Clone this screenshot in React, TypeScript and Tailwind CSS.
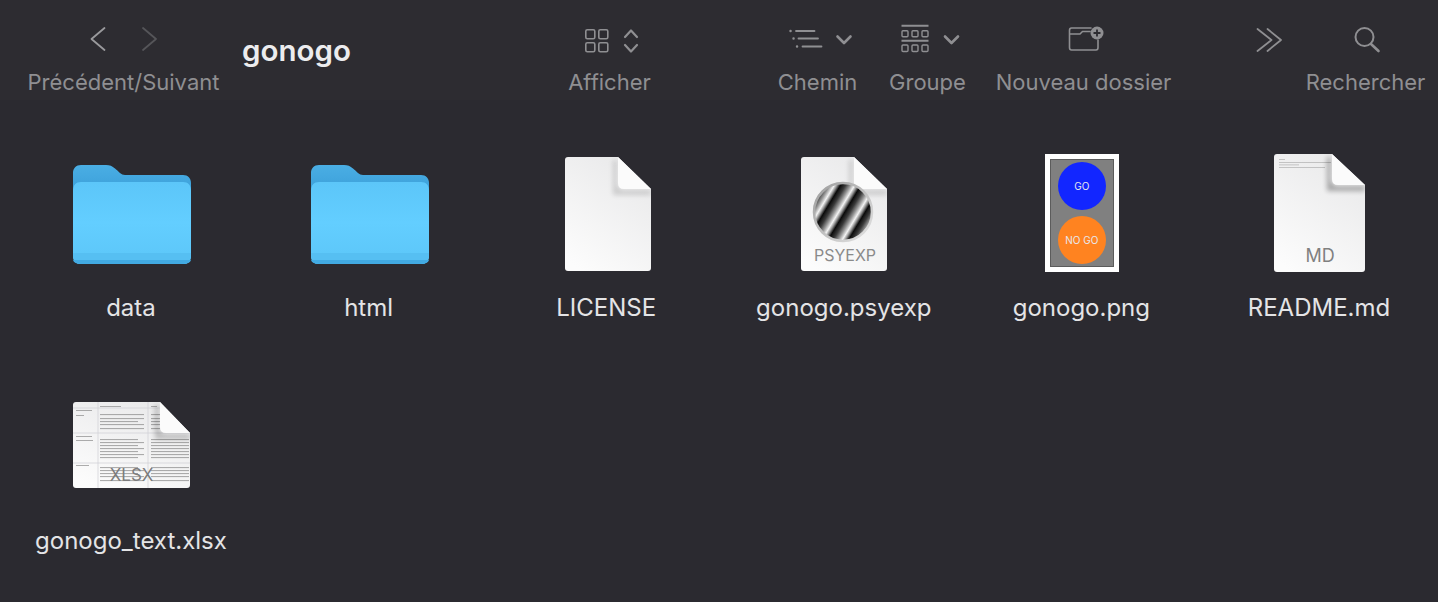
import type { ReactNode } from "react";

const labelFont = "font-['Inter','Liberation_Sans',sans-serif]";
const svgFont = "Inter, Liberation Sans, sans-serif";

function Folder({ id }: { id: string }) {
  return (
    <svg width="128" height="128" viewBox="0 0 128 128" fill="none">
      <defs>
        <linearGradient id={`${id}-back`} x1="0" y1="0" x2="0" y2="1">
          <stop offset="0" stopColor="#4aaee4" />
          <stop offset="1" stopColor="#2b8fcd" />
        </linearGradient>
        <linearGradient id={`${id}-front`} x1="0" y1="0" x2="0" y2="1">
          <stop offset="0" stopColor="#5cc6f9" />
          <stop offset="0.5" stopColor="#63ceff" />
          <stop offset="1" stopColor="#5cc6f8" />
        </linearGradient>
      </defs>
      <path
        d="M6 23c0-4.500 3-8 8-8h25c4 0 6 1 9 3.500 4 3 6 6.500 10 6.500h58c5 0 8 3.500 8 8v40h-118z"
        fill={`url(#${id}-back)`}
      />
      <path
        d="M6 41c0-6 3-9 8-9h102c5 0 8 3 8 9v65c0 4.500-3 8-8 8h-102c-5 0-8-3.500-8-8z"
        fill={`url(#${id}-front)`}
      />
      <path d="M6 103h118v3c0 4.500-3 8-8 8h-102c-5 0-8-3.500-8-8z" fill="#56bff2" />
      <path d="M6 110h118c-.7 2.500-3.500 4-8 4h-102c-4.500 0-7.300-1.500-8-4z" fill="#42aae2" />
    </svg>
  );
}

type PageProps = {
  id: string;
  x0: number;
  x1: number;
  y0: number;
  y1: number;
  foldX: number;
  foldY: number;
  shadow?: number;
  children?: ReactNode;
};

function Page({ id, x0, x1, y0, y1, foldX, foldY, shadow = 0.14, children }: PageProps) {
  return (
    <>
      <defs>
        <linearGradient id={id} x1="0.75" y1="0" x2="0.2" y2="1">
          <stop offset="0" stopColor="#e9e9ea" />
          <stop offset="1" stopColor="#fcfcfc" />
        </linearGradient>
        <filter id={`${id}-blur`} x="-40%" y="-40%" width="180%" height="180%">
          <feGaussianBlur stdDeviation="2.5" />
        </filter>
        <clipPath id={`${id}-clip`}>
          <path d={`M${x0} ${y0}H${foldX}L${x1} ${foldY}V${y1}H${x0}Z`} />
        </clipPath>
      </defs>
      <path
        d={`M${x0 + 3} ${y0}H${foldX}L${x1} ${foldY}V${y1 - 3}Q${x1} ${y1} ${x1 - 3} ${y1}H${x0 + 3}Q${x0} ${y1} ${x0} ${y1 - 3}V${y0 + 3}Q${x0} ${y0} ${x0 + 3} ${y0}Z`}
        fill={`url(#${id})`}
      />
      {children}
      <g clipPath={`url(#${id}-clip)`}>
        <path
          d={`M${foldX - 1} ${y0 + 3}V${foldY - 6}Q${foldX - 1} ${foldY + 1} ${foldX + 6} ${foldY + 1}H${x1}V${foldY + 6}H${foldX - 5}V${y0 + 3}Z`}
          fill="#000"
          opacity={shadow}
          filter={`url(#${id}-blur)`}
        />
      </g>
      <path d={`M${foldX} ${y0}L${x1} ${foldY}H${foldX + 6}Q${foldX} ${foldY} ${foldX} ${foldY - 6}Z`} fill="#fbfbfb" />
    </>
  );
}

function LicenseIcon() {
  return (
    <svg width="128" height="128" viewBox="0 0 128 128">
      <Page id="lic" x0={23} x1={109} y0={7} y1={121} foldX={76} foldY={39} />
    </svg>
  );
}

function PsyexpIcon() {
  return (
    <svg width="128" height="128" viewBox="0 0 128 128">
      <defs>
        <linearGradient id="stripes" gradientUnits="userSpaceOnUse" x1="0" y1="0" x2="15" y2="9" spreadMethod="repeat">
          <stop offset="0" stopColor="#0a0a0a" />
          <stop offset="0.25" stopColor="#3a3a3a" />
          <stop offset="0.5" stopColor="#9a9a9a" />
          <stop offset="0.7" stopColor="#f4f4f4" />
          <stop offset="0.85" stopColor="#8a8a8a" />
          <stop offset="1" stopColor="#0a0a0a" />
        </linearGradient>
        <linearGradient id="ring" x1="0" y1="0" x2="1" y2="1">
          <stop offset="0" stopColor="#9c9c9c" />
          <stop offset="1" stopColor="#e4e4e4" />
        </linearGradient>
      </defs>
      <Page id="psy" x0={21} x1={107} y0={7} y1={121} foldX={74} foldY={39} />
      <circle cx="63" cy="62" r="29" fill="url(#stripes)" stroke="url(#ring)" strokeWidth="2.500" />
      <text x="65" y="111" textAnchor="middle" fontFamily={svgFont} fontSize="16" fill="#8a8a8a">
        PSYEXP
      </text>
    </svg>
  );
}

function ThumbIcon() {
  return (
    <div className="flex h-[128px] w-[128px] items-start justify-center pl-[1px] pt-1">
      <div className={`flex h-[118px] w-[74px] border-[5px] border-white ${labelFont}`}>
        <div className="flex h-full w-full flex-col items-center justify-center gap-[6px] border border-[#5c5c5c] bg-[#808080] text-[10px] text-[#e8e8ee]">
          <div className="flex h-[48px] w-[48px] items-center justify-center rounded-full bg-[#1226ff]">GO</div>
          <div className="flex h-[48px] w-[48px] items-center justify-center rounded-full bg-[#ff8320]">NO GO</div>
        </div>
      </div>
    </div>
  );
}

function MdIcon() {
  return (
    <svg width="128" height="128" viewBox="0 0 128 128">
      <Page id="md" x0={19} x1={110} y0={4} y1={122} foldX={77} foldY={35} shadow={0.3}>
        <g fill="#8a8a8a" opacity="0.55">
          <rect x="24" y="9" width="6" height="0.8" />
          <rect x="24" y="12" width="52" height="0.8" />
          <rect x="24" y="14.500" width="20" height="0.8" />
          <rect x="24" y="17" width="46" height="0.8" />
        </g>
      </Page>
      <text x="65" y="112" textAnchor="middle" fontFamily={svgFont} fontSize="18" fill="#808080">
        MD
      </text>
    </svg>
  );
}

function XlsxIcon() {
  const rows = [31, 35, 38, 41, 45, 56, 59, 62, 65, 68, 71, 74, 84, 87, 90, 93, 97];
  return (
    <svg width="128" height="128" viewBox="0 0 128 128">
      <defs>
        <filter id="xl-soft" x="-5%" y="-5%" width="110%" height="110%">
          <feGaussianBlur stdDeviation="0.5" />
        </filter>
      </defs>
      <Page id="xl" x0={6} x1={123} y0={19} y1={105} foldX={93} foldY={50} shadow={0.22}>
        <path d="M31 19V105M81 19V105M6 25H93M6 50H123M6 80H123" stroke="#cfcfd4" strokeWidth="0.700" />
        <g fill="#8c8c8c" opacity="0.7" filter="url(#xl-soft)">
          {rows.map((y) => (
            <g key={y}>
              <rect x="33" y={y} width={y % 2 === 0 ? 38 : 44} height="1.100" />
              <rect x="84" y={y} width={y < 50 ? 9 : 38} height="1.100" />
            </g>
          ))}
          <rect x="33" y="23" width="21" height="1" />
          <rect x="84" y="23" width="6" height="1" />
          <rect x="9" y="27" width="16" height="1" />
          <rect x="9" y="32" width="8" height="1" />
          <rect x="9" y="53" width="16" height="1" />
          <rect x="9" y="57" width="17" height="1" />
          <rect x="9" y="82" width="13" height="1" />
        </g>
      </Page>
      <text x="64.500" y="98" textAnchor="middle" fontFamily={svgFont} fontSize="17" fill="#7c7c7c">
        XLSX
      </text>
    </svg>
  );
}

function FileCell({ name, children }: { name: string; children: ReactNode }) {
  return (
    <div className="flex h-[233px] flex-col items-center">
      {children}
      <div className="mt-[15px] whitespace-nowrap text-[24px] leading-[30px] text-[#e4e4e6]">{name}</div>
    </div>
  );
}

function ToolItem({ label, className, children }: { label: string; className: string; children: ReactNode }) {
  return (
    <div className={`flex flex-col items-center ${className}`}>
      <div className="flex h-[40px] items-center">{children}</div>
      <div className="mt-[9px] whitespace-nowrap text-[22px] leading-[28px] text-[#8f8f92]">{label}</div>
    </div>
  );
}

const stroke = {
  fill: "none",
  stroke: "#8f8f92",
  strokeWidth: 2,
  strokeLinecap: "round" as const,
  strokeLinejoin: "round" as const,
};

export default function App() {
  return (
    <div className={`h-[602px] w-[1438px] overflow-hidden bg-[#2b2a30] ${labelFont}`}>
      {/* barre d'outils */}
      <div className="flex h-[100px] items-start bg-[#2d2c31] pt-[19px]">
        <ToolItem label="Précédent/Suivant" className="ml-[28px] w-[191px]">
          <svg width="80" height="40" viewBox="0 0 80 40">
            <path d="M20.500 9L7.500 20L20.500 31" {...stroke} strokeWidth={1.800} stroke="#9a9a9d" />
            <path d="M59 9L72 20L59 31" {...stroke} strokeWidth={1.800} stroke="#555559" />
          </svg>
        </ToolItem>
        <div className="ml-[23px] mt-[13px] w-[108px] whitespace-nowrap text-[29.5px] font-semibold leading-[36px] text-[#ececee]">
          gonogo
        </div>
        <ToolItem label="Afficher" className="ml-[218px] w-[83px]">
          <svg width="60" height="40" viewBox="0 0 60 40">
            <g {...stroke} strokeWidth={1.600}>
              <rect x="5.800" y="10.800" width="9" height="9" rx="1.500" />
              <rect x="18.800" y="10.800" width="9" height="9" rx="1.500" />
              <rect x="5.800" y="23.800" width="9" height="9" rx="1.500" />
              <rect x="18.800" y="23.800" width="9" height="9" rx="1.500" />
              <path d="M45 18L51 11.500L57 18" strokeWidth={2.200} />
              <path d="M45 26L51 32.500L57 26" strokeWidth={2.200} />
            </g>
          </svg>
        </ToolItem>
        <ToolItem label="Chemin" className="ml-[127px] w-[79px]">
          <svg width="70" height="40" viewBox="0 0 70 40">
            <g {...stroke} strokeWidth={1.800}>
              <path d="M7.500 12h.1M10.500 19.500h.1M14 27.500h.1" strokeWidth={2.400} />
              <path d="M13 12H31.500M15.500 19.500H35M19.500 27.500H38.500" />
              <path d="M54.500 17.500L61 24L67.500 17.500" strokeWidth={2.600} />
            </g>
          </svg>
        </ToolItem>
        <ToolItem label="Groupe" className="ml-[32px] w-[77px]">
          <svg width="66" height="40" viewBox="0 0 66 40">
            <g {...stroke} strokeWidth={1.400}>
              <path d="M6.500 6.700H33.500M6.500 21.700H33.500" strokeWidth={2} strokeLinecap="butt" />
              <rect x="7" y="11.700" width="6" height="6" rx="1" />
              <rect x="17" y="11.700" width="6" height="6" rx="1" />
              <rect x="27" y="11.700" width="6" height="6" rx="1" />
              <rect x="7" y="26" width="6" height="6.500" rx="1" />
              <rect x="17" y="26" width="6" height="6.500" rx="1" />
              <rect x="27" y="26" width="6" height="6.500" rx="1" />
              <path d="M50 17.500L56.500 24L63 17.500" strokeWidth={2.600} />
            </g>
          </svg>
        </ToolItem>
        <ToolItem label="Nouveau dossier" className="ml-[30px] w-[175px]">
          <svg width="44" height="40" viewBox="0 0 44 40">
            <path
              d="M29 9H9.500C8 9 7.500 10 7.500 11.500V28.500C7.500 30 8 31 9.500 31H34C35.500 31 36 30 36 28.500V21M7.500 15H18L20.500 12.500H28"
              {...stroke}
              strokeWidth={1.600}
            />
            <circle cx="35" cy="14" r="6.500" fill="#8f8f92" />
            <path d="M35 10.500V17.500M31.500 14H38.500" stroke="#2d2c31" strokeWidth={1.800} />
          </svg>
        </ToolItem>
        <ToolItem label="" className="ml-[80px] w-[34px]">
          <svg width="34" height="40" viewBox="0 0 34 40">
            <path d="M6.500 10L20.500 21L6.500 32M16.500 10L30 21L16.500 32" {...stroke} strokeWidth={1.800} />
          </svg>
        </ToolItem>
        <ToolItem label="Rechercher" className="ml-[21px] w-[119px]">
          <svg width="34" height="40" viewBox="0 0 34 40">
            <circle cx="15.500" cy="18" r="9" {...stroke} strokeWidth={2} />
            <path d="M22 25L29.500 32" {...stroke} strokeWidth={2.600} />
          </svg>
        </ToolItem>
      </div>

      {/* fichiers */}
      <div className="ml-[12.200px] grid grid-cols-[repeat(6,237.6px)] pt-[50px]">
        <FileCell name="data"><Folder id="f1" /></FileCell>
        <FileCell name="html"><Folder id="f2" /></FileCell>
        <FileCell name="LICENSE"><LicenseIcon /></FileCell>
        <FileCell name="gonogo.psyexp"><PsyexpIcon /></FileCell>
        <FileCell name="gonogo.png"><ThumbIcon /></FileCell>
        <FileCell name="README.md"><MdIcon /></FileCell>
        <FileCell name="gonogo_text.xlsx"><XlsxIcon /></FileCell>
      </div>
    </div>
  );
}
